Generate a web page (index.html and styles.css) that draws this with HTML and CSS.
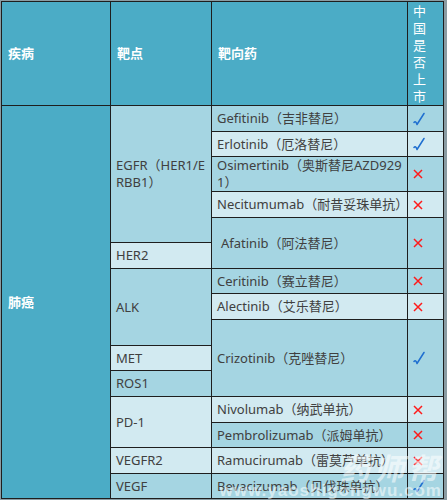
FILE: index.html
```html
<!DOCTYPE html>
<html lang="zh-CN">
<head>
<meta charset="utf-8">
<title>肺癌靶向药</title>
<link rel="stylesheet" href="styles.css">
</head>
<body>
<div class="wrap">
  <div class="grid">
    <div class="cell head">疾病</div>
    <div class="cell head">靶点</div>
    <div class="cell head">靶向药</div>
    <div class="cell head vert"><span>中</span><span>国</span><span>是</span><span>否</span><span>上</span><span>市</span></div>

    <div class="cell head rs15">肺癌</div>
    <div class="cell dark rs5 nowrap">EGFR（HER1/E<br>RBB1）</div>
    <div class="cell dark">Gefitinib（吉非替尼）</div>
    <div class="cell dark mark"><svg class="chk" viewBox="0 0 12 14" width="12" height="14"><path d="M1 10.5 Q2.6 8.4 4 12.5 L11 1.5"/></svg></div>

    <div class="cell light">Erlotinib（厄洛替尼）</div>
    <div class="cell light mark"><svg class="chk" viewBox="0 0 12 14" width="12" height="14"><path d="M1 10.5 Q2.6 8.4 4 12.5 L11 1.5"/></svg></div>

    <div class="cell dark nowrap">Osimertinib（奥斯替尼AZD929<br>1）</div>
    <div class="cell dark mark"><svg class="x" viewBox="0 0 10 10" width="10" height="10"><path d="M1 1 L9 9 M9 1 L1 9"/></svg></div>

    <div class="cell light">Necitumumab（耐昔妥珠单抗）</div>
    <div class="cell light mark"><svg class="x" viewBox="0 0 10 10" width="10" height="10"><path d="M1 1 L9 9 M9 1 L1 9"/></svg></div>

    <div class="cell dark rs2 indent">Afatinib（阿法替尼）</div>
    <div class="cell dark rs2 mark"><svg class="x" viewBox="0 0 10 10" width="10" height="10"><path d="M1 1 L9 9 M9 1 L1 9"/></svg></div>

    <div class="cell light">HER2</div>

    <div class="cell dark rs3">ALK</div>
    <div class="cell dark">Ceritinib（赛立替尼）</div>
    <div class="cell dark mark"><svg class="x" viewBox="0 0 10 10" width="10" height="10"><path d="M1 1 L9 9 M9 1 L1 9"/></svg></div>

    <div class="cell light">Alectinib（艾乐替尼）</div>
    <div class="cell light mark"><svg class="x" viewBox="0 0 10 10" width="10" height="10"><path d="M1 1 L9 9 M9 1 L1 9"/></svg></div>

    <div class="cell dark rs3">Crizotinib（克唑替尼）</div>
    <div class="cell dark rs3 mark"><svg class="chk" viewBox="0 0 12 14" width="12" height="14"><path d="M1 10.5 Q2.6 8.4 4 12.5 L11 1.5"/></svg></div>

    <div class="cell light">MET</div>
    <div class="cell dark">ROS1</div>

    <div class="cell light rs2">PD-1</div>
    <div class="cell light">Nivolumab（纳武单抗）</div>
    <div class="cell light mark"><svg class="x" viewBox="0 0 10 10" width="10" height="10"><path d="M1 1 L9 9 M9 1 L1 9"/></svg></div>

    <div class="cell dark">Pembrolizumab（派姆单抗）</div>
    <div class="cell dark mark"><svg class="x" viewBox="0 0 10 10" width="10" height="10"><path d="M1 1 L9 9 M9 1 L1 9"/></svg></div>

    <div class="cell light">VEGFR2</div>
    <div class="cell light">Ramucirumab（雷莫芦单抗）</div>
    <div class="cell light mark"><svg class="x" viewBox="0 0 10 10" width="10" height="10"><path d="M1 1 L9 9 M9 1 L1 9"/></svg></div>

    <div class="cell dark">VEGF</div>
    <div class="cell dark">Bevacizumab（贝伐珠单抗）</div>
    <div class="cell dark mark"><svg class="chk" viewBox="0 0 12 14" width="12" height="14"><path d="M1 10.5 Q2.6 8.4 4 12.5 L11 1.5"/></svg></div>
  </div>
  <div class="watermark">
    <div class="wm-big">药师帮</div>
    <div class="wm-small">www.yaoshigongwu.com</div>
  </div>
</div>
</body>
</html>
```

FILE: styles.css
```css
html, body {
  margin: 0;
  padding: 0;
}
body {
  background: #8a9ca3;
  width: 447px;
  height: 500px;
  overflow: hidden;
  font-family: "Noto Sans", "Noto Sans CJK SC", sans-serif;
  font-size: 13px;
}
.wrap {
  position: relative;
  margin: 1px 0 0 1px;
  width: 443px;
}
.grid {
  display: grid;
  grid-template-columns: 108px 100px 195px 35px;
  grid-template-rows: 103px 25px 24px 34px 25px 24px 25px 24px 25px 25px 24px 25px 25px 24px 25px 24px;
  gap: 1px;
  padding: 1px;
  background: #1e1e1e;
  width: max-content;
}
.cell {
  display: flex;
  align-items: center;
  padding: 0 5px 0 5px;
  line-height: 17px;
  color: #404040;
  white-space: nowrap;
  overflow: hidden;
}
.head {
  background: #4bacc6;
  color: #ffffff;
  font-weight: bold;
  padding-left: 6px;
}
.dark { background: #a5d5e2; }
.light { background: #d2eaf1; }
.rs2 { grid-row: span 2; }
.rs3 { grid-row: span 3; }
.rs5 { grid-row: span 5; }
.rs15 { grid-row: span 15; }
.indent { padding-left: 9px; }
.vert {
  flex-direction: column;
  align-items: flex-start;
  justify-content: center;
  padding-left: 5px;
  font-weight: normal;
}
.vert span {
  display: block;
  line-height: 17px;
}
.mark {
  padding-left: 5px;
}
.chk path {
  fill: none;
  stroke: #1f6fd0;
  stroke-width: 1.5;
  stroke-linecap: round;
  stroke-linejoin: round;
}
.x path {
  fill: none;
  stroke: #ff1a1a;
  stroke-width: 1.5;
}
.watermark {
  position: absolute;
  right: 2px;
  bottom: -1px;
  color: rgba(255, 255, 255, 0.55);
  text-align: right;
  pointer-events: none;
}
.wm-big {
  font-family: "Noto Sans CJK SC", sans-serif;
  font-size: 30px;
  font-weight: bold;
  line-height: 30px;
  letter-spacing: 4px;
  font-style: italic;
}
.wm-small {
  font-family: "Liberation Sans", sans-serif;
  font-size: 17px;
  font-weight: bold;
  line-height: 18px;
  letter-spacing: 1px;
}
```
